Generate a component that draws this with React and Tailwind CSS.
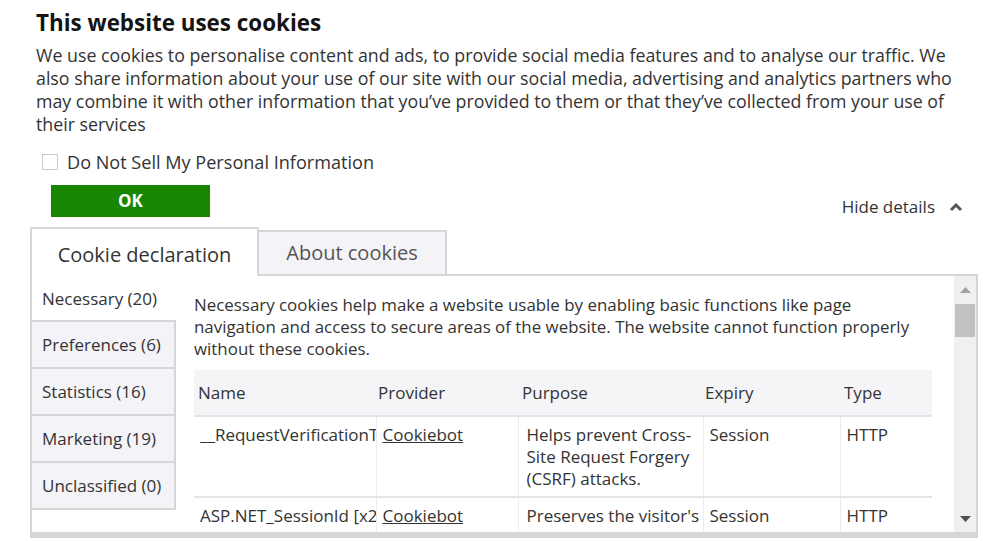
import React from 'react';

const navItems = [
  { label: 'Necessary (20)', active: true },
  { label: 'Preferences (6)' },
  { label: 'Statistics (16)' },
  { label: 'Marketing (19)' },
  { label: 'Unclassified (0)' },
];

const rows = [
  {
    name: '__RequestVerificationToken',
    provider: 'Cookiebot',
    purpose: 'Helps prevent Cross-Site Request Forgery (CSRF) attacks.',
    expiry: 'Session',
    type: 'HTTP',
  },
  {
    name: 'ASP.NET_SessionId [x2]',
    provider: 'Cookiebot',
    purpose: "Preserves the visitor's session state across page requests.",
    expiry: 'Session',
    type: 'HTTP',
  },
];

const App = () => {
  return (
    <div className="w-[989px] h-[541px] bg-white overflow-hidden font-['Open_Sans',sans-serif] text-[#333]">
      <div className="pl-[36px] pr-[24px] pt-[6px]">
        <h1 className="text-[22.4px] leading-[34px] font-bold text-[#141414]">This website uses cookies</h1>
        <p className="mt-[4px] text-[17.8px] leading-[23px] text-[#333]">
          We use cookies to personalise content and ads, to provide social media features and to analyse our traffic. We also share information about your use of our site with our social media, advertising and analytics partners who may combine it with other information that you’ve provided to them or that they’ve collected from your use of their services
        </p>
      </div>

      <label className="flex items-center gap-[9px] ml-[42px] mt-[15px] h-[22px]">
        <span className="w-[16px] h-[16px] border border-[#c8c8c8] bg-white" />
        <span className="text-[18.1px] leading-[22px] text-[#333]">Do Not Sell My Personal Information</span>
      </label>

      <div className="flex items-start justify-between h-[32px] mt-[12px] pl-[51px] pr-[26px]">
        <button className="w-[159px] h-[32px] bg-[#188600] text-white font-bold text-[17px]">OK</button>
        <div className="flex items-center gap-[14px] pt-[10px] leading-[24px] text-[17px] text-[#333]">
          <span>Hide details</span>
          <svg width="14" height="10" viewBox="0 0 14 10">
            <path d="M2 8 L7 3 L12 8" fill="none" stroke="#555" strokeWidth="3" />
          </svg>
        </div>
      </div>

      <div className="mx-[30px] mt-[10px] w-[948px]">
        {/* tabs */}
        <div className="flex items-end h-[49px]">
          <div className="w-[229px] h-[49px] bg-white border-2 border-b-0 border-[#d6d6d6] rounded-t-[2px] flex items-center justify-center pt-[4px] text-[20px] text-[#333]">
            Cookie declaration
          </div>
          <div className="w-[188px] h-[46px] bg-[#f3f3f8] border-2 border-[#d6d6d6] border-l-0 flex items-center justify-center text-[20px] text-[#555]">
            About cookies
          </div>
          <div className="flex-1 border-b-2 border-[#d6d6d6]" />
        </div>

        {/* box */}
        <div className="h-[262px] border-2 border-t-0 border-b-[6px] border-[#d6d6d6] flex">
          <div className="w-[144px] flex flex-col">
            {navItems.map((item) => (
              <div
                key={item.label}
                className={
                  item.active
                    ? 'h-[46px] bg-white flex items-center pl-[10px] text-[17px] text-[#333]'
                    : 'h-[49px] bg-[#f3f3f8] border-2 border-l-0 border-[#d6d6d6] -mt-[2px] first:mt-0 flex items-center pl-[10px] text-[17px] text-[#333]'
                }
              >
                {item.label}
              </div>
            ))}
          </div>

          <div className="flex-1 pl-[18px] pr-[20px] pt-[18px] overflow-hidden">
            <p className="text-[16.9px] leading-[22px] text-[#333]">
              Necessary cookies help make a website usable by enabling basic functions like page navigation and access to secure areas of the website. The website cannot function properly without these cookies.
            </p>
            <table className="mt-[10px] w-[738px] table-fixed border-collapse text-[17px] text-[#333]">
              <colgroup>
                <col className="w-[182px]" />
                <col className="w-[142px]" />
                <col className="w-[185px]" />
                <col className="w-[137px]" />
                <col className="w-[92px]" />
              </colgroup>
              <thead>
                <tr className="bg-[#f5f5f8] h-[46px] border-b-2 border-[#e4e4e8]">
                  <th className="text-left font-normal pl-[4px]">Name</th>
                  <th className="text-left font-normal pl-[2px]">Provider</th>
                  <th className="text-left font-normal pl-[4px]">Purpose</th>
                  <th className="text-left font-normal pl-[2px]">Expiry</th>
                  <th className="text-left font-normal pl-[4px]">Type</th>
                </tr>
              </thead>
              <tbody>
                {rows.map((row) => (
                  <tr key={row.name} className="border-b-2 border-[#e4e4e8] align-top leading-[22px]">
                    <td className="pl-[6px] pt-[7px] pb-[6px] whitespace-nowrap overflow-hidden">{row.name}</td>
                    <td className="pl-[6px] pt-[7px] pb-[6px] border-l border-[#ececf0]">
                      <span className="underline">{row.provider}</span>
                    </td>
                    <td className="pl-[8px] pt-[7px] pb-[6px] border-l border-[#ececf0]">{row.purpose}</td>
                    <td className="pl-[6px] pt-[7px] pb-[6px] border-l border-[#ececf0]">{row.expiry}</td>
                    <td className="pl-[6px] pt-[7px] pb-[6px] border-l border-[#ececf0]">{row.type}</td>
                  </tr>
                ))}
              </tbody>
            </table>
          </div>

          {/* scrollbar */}
          <div className="w-[22px] bg-[#f0f0f0] flex flex-col items-center">
            <div className="h-[28px] flex items-center justify-center">
              <svg width="11" height="6" viewBox="0 0 11 6"><path d="M0 6 L5.5 0 L11 6 Z" fill="#a3a3a3" /></svg>
            </div>
            <div className="w-[20px] h-[33px] bg-[#c1c1c1]" />
            <div className="flex-1" />
            <div className="h-[26px] flex items-center justify-center">
              <svg width="11" height="6" viewBox="0 0 11 6"><path d="M0 0 L11 0 L5.5 6 Z" fill="#505050" /></svg>
            </div>
          </div>
        </div>
      </div>
    </div>
  );
};

export default App;
